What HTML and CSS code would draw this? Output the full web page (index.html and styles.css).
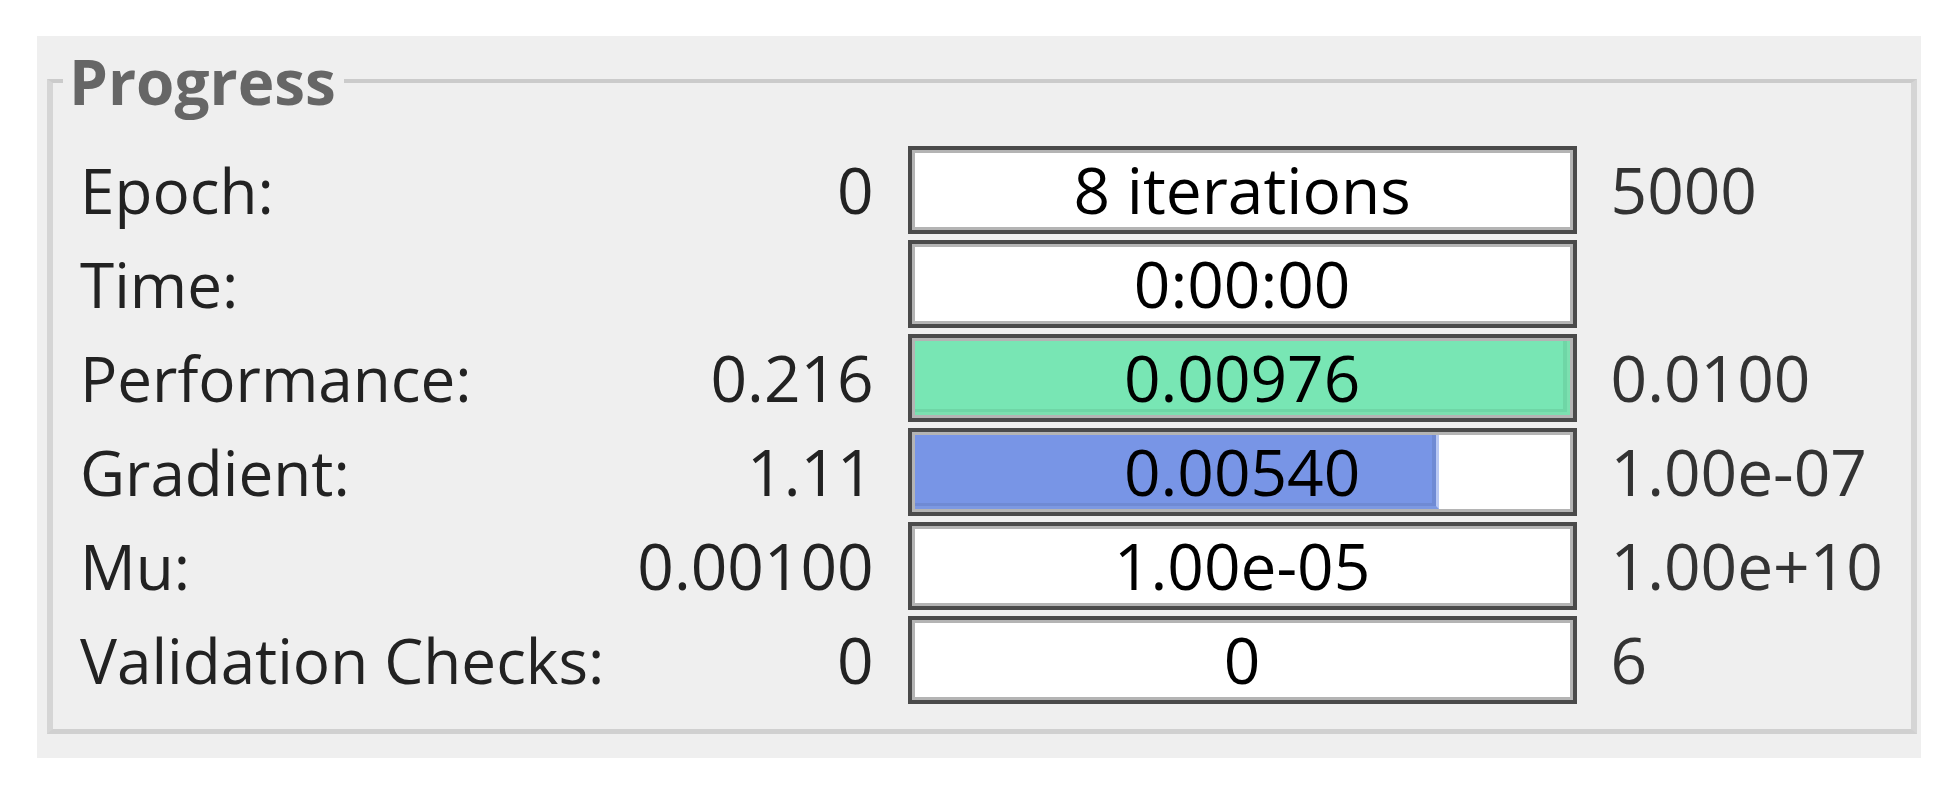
FILE: index.html
```html
<!DOCTYPE html>
<html lang="en">
    <head>
        <meta charset="utf-8">
        <title>Progress</title>
        <link rel="stylesheet" href="styles.css">
    </head>
    <body>
        <div class="panel">
            <fieldset class="group">
                <legend>Progress</legend>
                <table class="stats">
                    <tr>
                        <th scope="row" id="epoch">Epoch:</th>
                        <td class="start">0</td>
                        <td class="barCell">
                            <div class="bar" role="progressbar" aria-labelledby="epoch">
                                <span class="value">8 iterations</span>
                            </div>
                        </td>
                        <td class="target">5000</td>
                    </tr>
                    <tr>
                        <th scope="row" id="time">Time:</th>
                        <td class="start"></td>
                        <td class="barCell">
                            <div class="bar" role="progressbar" aria-labelledby="time">
                                <span class="value">0:00:00</span>
                            </div>
                        </td>
                        <td class="target"></td>
                    </tr>
                    <tr>
                        <th scope="row" id="performance">Performance:</th>
                        <td class="start">0.216</td>
                        <td class="barCell">
                            <div class="bar" role="progressbar" aria-labelledby="performance">
                                <span class="fill green" style="width: 100%"></span>
                                <span class="value">0.00976</span>
                            </div>
                        </td>
                        <td class="target">0.0100</td>
                    </tr>
                    <tr>
                        <th scope="row" id="gradient">Gradient:</th>
                        <td class="start">1.11</td>
                        <td class="barCell">
                            <div class="bar" role="progressbar" aria-labelledby="gradient">
                                <span class="fill blue" style="width: 80%"></span>
                                <span class="value">0.00540</span>
                            </div>
                        </td>
                        <td class="target">1.00e-07</td>
                    </tr>
                    <tr>
                        <th scope="row" id="mu">Mu:</th>
                        <td class="start">0.00100</td>
                        <td class="barCell">
                            <div class="bar" role="progressbar" aria-labelledby="mu">
                                <span class="value">1.00e-05</span>
                            </div>
                        </td>
                        <td class="target">1.00e+10</td>
                    </tr>
                    <tr>
                        <th scope="row" id="checks">Validation Checks:</th>
                        <td class="start">0</td>
                        <td class="barCell">
                            <div class="bar" role="progressbar" aria-labelledby="checks">
                                <span class="value">0</span>
                            </div>
                        </td>
                        <td class="target">6</td>
                    </tr>
                </table>
            </fieldset>
        </div>
    </body>
</html>
```

FILE: styles.css
```css
body{
    font-family: "Open Sans", "Noto Sans", sans-serif;
    font-size: 64px;
    line-height: 76px;
    margin: 36px 39px 0 37px;
    background-color: #fff;
    color: #222;
}
.panel{
    padding: 7px 4px 24px 10px;
    background-color: #efefef;
}
.group{
    margin: 0;
    padding: 21px 0 19px;
    border: 6px solid #d5d5d5;
    border-top: 4px solid #cbcbcb;
    border-bottom: 5px solid #d0d0d0;
}
legend{
    margin-left: 10px;
    padding: 0 8px 0 6px;
    font-size: 62px;
    font-weight: bold;
    color: #666;
}
.stats{
    width: 100%;
    table-layout: fixed;
    border-collapse: separate;
    border-spacing: 0 6px;
}
.stats th, .stats td{
    padding: 0;
    white-space: nowrap;
}
.stats th{
    width: 30%;
    padding-left: 27px;
    box-sizing: border-box;
    font-size: 62px;
    font-weight: normal;
    text-align: left;
}
.stats .start{
    width: 16%;
    padding-right: 34px;
    box-sizing: border-box;
    text-align: right;
}
.stats .barCell{
    width: 36%;
}
.stats .target{
    padding-left: 34px;
    color: #333;
}
.bar{
    display: grid;
    border: 4px solid #4a4a4a;
    outline: 3px solid #b4b4b4;
    outline-offset: -7px;
    padding: 3px;
    background-color: #fff;
    color: #000;
}
/* fill and value share one cell so the text sits on the fill */
.fill, .value{
    grid-area: 1 / 1;
}
.fill{
    box-sizing: border-box;
}
.green{
    background-color: #78e6b4;
    border-right: 3px solid #7ce0b0;
    border-bottom: 3px solid #7ce0b0;
    box-shadow: inset -4px -3px 0 #6fd6a6;
}
.blue{
    background-color: #7895e6;
    border-right: 3px solid #b9c8f4;
    border-bottom: 3px solid #7c98e2;
    box-shadow: inset -4px -3px 0 #6f8ad4;
}
.value{
    line-height: 74px;
    text-align: center;
    font-weight: 500;
}
```
